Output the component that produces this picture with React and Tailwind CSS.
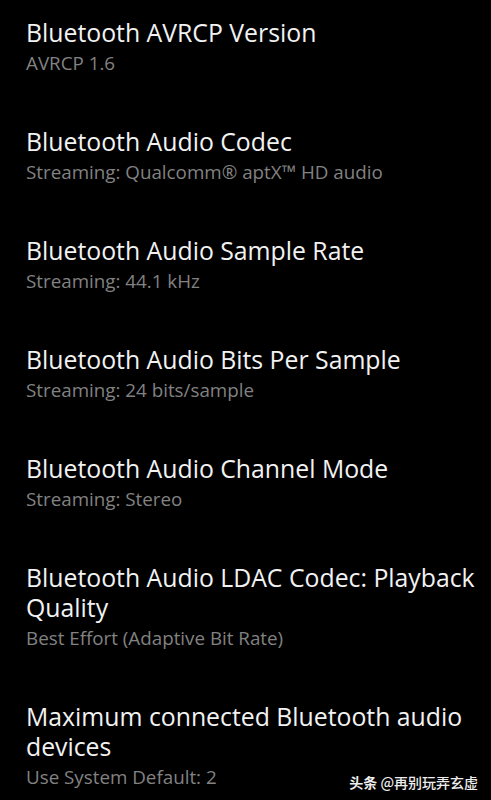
import React from "react";

const items = [
  ["Bluetooth AVRCP Version", "AVRCP 1.6"],
  ["Bluetooth Audio Codec", "Streaming: Qualcomm® aptX™ HD audio"],
  ["Bluetooth Audio Sample Rate", "Streaming: 44.1 kHz"],
  ["Bluetooth Audio Bits Per Sample", "Streaming: 24 bits/sample"],
  ["Bluetooth Audio Channel Mode", "Streaming: Stereo"],
  ["Bluetooth Audio LDAC Codec: Playback Quality", "Best Effort (Adaptive Bit Rate)"],
  ["Maximum connected Bluetooth audio devices", "Use System Default: 2"],
];

export default function App() {
  return (
    <div
      className="relative w-[491px] h-[800px] bg-black overflow-hidden pl-[26px] pr-[10px] pt-[17px]"
      style={{ fontFamily: '"Open Sans", "Noto Sans", sans-serif' }}
    >
      <div className="flex flex-col gap-[51px]">
        {items.map(([t, s]) => (
          <div key={t} className="flex flex-col">
            <div className="text-[24.8px] leading-[30px] text-[#f2f2f2]">{t}</div>
            <div className="mt-[4px] text-[18.8px] leading-[24px] text-[#828282]">{s}</div>
          </div>
        ))}
      </div>
      <div
        className="absolute right-[13px] bottom-[10px] text-[14px] leading-[16px] text-[#eeeeee] font-medium"
        style={{ fontFamily: '"Noto Sans CJK SC", "Noto Sans", sans-serif' }}
      >
        <span className="font-bold">头条</span> @再别玩弄玄虚
      </div>
    </div>
  );
}
